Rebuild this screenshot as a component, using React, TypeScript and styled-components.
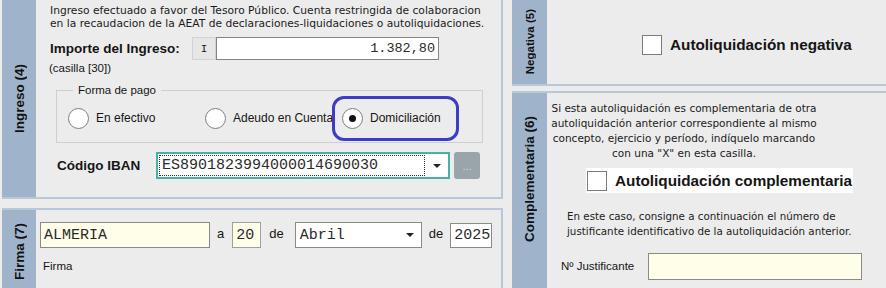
import React from 'react'
import styled, { createGlobalStyle } from 'styled-components'

const GlobalStyle = createGlobalStyle`
    html, body {
        margin: 0;
        padding: 0;
        background: #ececec;
    }
    body {
        font-family: 'Liberation Sans', Arial, sans-serif;
        font-size: 11px;
        color: #151515;
    }
`

const TAB_BG = '#9fb4cb'
const LINE = '#b9c8d8'
const MONO = `'Liberation Mono', 'Courier New', monospace`
const WIDE = `'DejaVu Sans', Verdana, sans-serif`

const Page = styled.div`
    width: 886px;
    height: 288px;
    overflow: hidden;
    box-sizing: border-box;
    padding-left: 2px;
    display: grid;
    grid-template-columns: 501px 1fr;
    column-gap: 9px;
`

const Column = styled.div<{ $gap: number }>`
    display: flex;
    flex-direction: column;
    gap: ${(p) => p.$gap}px;
    min-height: 0;
`

const Section = styled.section<{ $h: number; $top?: boolean; $bottom?: boolean; $right?: boolean }>`
    flex: 0 0 ${(p) => p.$h}px;
    display: flex;
    box-sizing: border-box;
    border-top: ${(p) => (p.$top ? `2px solid ${LINE}` : 'none')};
    border-bottom: ${(p) => (p.$bottom ? `2px solid ${LINE}` : 'none')};
    border-right: ${(p) => (p.$right ? `2px solid ${LINE}` : 'none')};
`

const Tab = styled.div<{ $w: number; $shift?: number }>`
    flex: 0 0 ${(p) => p.$w}px;
    background: ${TAB_BG};
    display: flex;
    align-items: center;
    justify-content: center;
    box-sizing: border-box;
    padding-bottom: ${(p) => p.$shift || 0}px;
`

const TabLabel = styled.span<{ $size: number }>`
    writing-mode: vertical-rl;
    transform: rotate(180deg);
    font-weight: bold;
    font-size: ${(p) => p.$size}px;
    color: #111;
    white-space: nowrap;
`

const Body = styled.div<{ $pad: string }>`
    flex: 1;
    position: relative;
    padding: ${(p) => p.$pad};
    box-sizing: border-box;
`

const Note = styled.p<{ $align?: string; $width?: number; $lh: number; $size: number }>`
    margin: 0;
    font-family: ${WIDE};
    font-size: ${(p) => p.$size}px;
    line-height: ${(p) => p.$lh}px;
    text-align: ${(p) => p.$align || 'left'};
    width: ${(p) => (p.$width ? `${p.$width}px` : 'auto')};
    white-space: nowrap;
    color: #1b1b1b;
`

const Row = styled.div<{ $mt: number; $ml?: number }>`
    display: flex;
    align-items: center;
    margin-top: ${(p) => p.$mt}px;
    margin-left: ${(p) => p.$ml || 0}px;
`

const BoldLabel = styled.span<{ $w?: number; $size?: number }>`
    font-weight: bold;
    font-size: ${(p) => p.$size || 13.5}px;
    width: ${(p) => (p.$w ? `${p.$w}px` : 'auto')};
    flex: 0 0 auto;
    white-space: nowrap;
`

const Prefix = styled.div`
    width: 24px;
    height: 23px;
    box-sizing: border-box;
    background: #e6e6e6;
    border: 1px solid #d2d2d2;
    display: flex;
    align-items: center;
    justify-content: center;
    font-family: ${MONO};
    font-size: 11px;
`

const Field = styled.div<{ $w: number; $h: number; $bg?: string; $border?: string; $align?: string; $size?: number }>`
    width: ${(p) => p.$w}px;
    height: ${(p) => p.$h}px;
    box-sizing: border-box;
    background: ${(p) => p.$bg || '#fff'};
    border: 1px solid ${(p) => p.$border || '#858585'};
    display: flex;
    align-items: center;
    justify-content: ${(p) => (p.$align === 'right' ? 'flex-end' : 'flex-start')};
    padding: 0 3px;
    font-family: ${MONO};
    font-size: ${(p) => p.$size || 15}px;
    color: #2a2a2a;
    flex: 0 0 auto;
`

const Small = styled.div<{ $mt: number; $ml?: number; $w?: number }>`
    margin-top: ${(p) => p.$mt}px;
    margin-left: ${(p) => p.$ml || 0}px;
    width: ${(p) => (p.$w ? `${p.$w}px` : 'auto')};
    flex: 0 0 auto;
    font-size: 11.5px;
    line-height: 13px;
`

const Fieldset = styled.fieldset`
    margin: 9px 0 0 6px;
    width: 427px;
    height: 59px;
    box-sizing: border-box;
    border: 1px solid #cfcfcf;
    padding: 0 0 0 11px;
    display: flex;
    align-items: center;
`

const Legend = styled.legend`
    margin-left: 5px;
    padding: 0 5px;
    font-size: 11.5px;
`

const RadioOption = styled.label`
    width: 137px;
    display: flex;
    align-items: center;
    gap: 7px;
    font-size: 12px;
    white-space: nowrap;
    margin-top: -2px;
`

const RadioCircle = styled.span<{ $on?: boolean }>`
    width: 21px;
    height: 21px;
    box-sizing: border-box;
    border-radius: 50%;
    border: 1px solid #7e7e7e;
    background: #fff;
    display: flex;
    align-items: center;
    justify-content: center;
    flex: 0 0 auto;

    &::after {
        content: '';
        display: ${(p) => (p.$on ? 'block' : 'none')};
        width: 7px;
        height: 7px;
        border-radius: 50%;
        background: #111;
    }
`

const Highlight = styled.div`
    position: absolute;
    left: 296px;
    top: 96px;
    width: 127px;
    height: 45px;
    box-sizing: border-box;
    border: 3.5px solid #3c3cc6;
    border-radius: 12px;
    pointer-events: none;
`

const Combo = styled.div<{ $w: number; $h: number; $border: string; $bw: number }>`
    width: ${(p) => p.$w}px;
    height: ${(p) => p.$h}px;
    box-sizing: border-box;
    border: ${(p) => p.$bw}px solid ${(p) => p.$border};
    background: #fff;
    display: flex;
    align-items: stretch;
    flex: 0 0 auto;
`

const ComboValue = styled.div<{ $focus?: boolean }>`
    flex: 1;
    margin: 1px;
    border: 1px ${(p) => (p.$focus ? 'dotted #333' : 'solid transparent')};
    display: flex;
    align-items: center;
    padding-left: 2px;
    font-family: ${MONO};
    font-size: 15px;
    color: #2a2a2a;
`

const ComboArrow = styled.div`
    flex: 0 0 22px;
    display: flex;
    align-items: center;
    justify-content: center;

    &::after {
        content: '';
        border-left: 4px solid transparent;
        border-right: 4px solid transparent;
        border-top: 4px solid #222;
    }
`

const DotsButton = styled.div`
    margin-left: 4px;
    width: 26px;
    height: 27px;
    border-radius: 3px;
    background: #99a4ab;
    color: #d6dbde;
    display: flex;
    align-items: center;
    justify-content: center;
    font-size: 11px;
`

const Word = styled.span<{ $ml: number; $mr: number }>`
    font-size: 13px;
    margin: -4px ${(p) => p.$mr}px 0 ${(p) => p.$ml}px;
`

const CheckRow = styled.div<{ $mt: number; $ml: number; $w?: number; $bg?: string }>`
    display: flex;
    align-items: center;
    gap: 8px;
    margin-top: ${(p) => p.$mt}px;
    margin-left: ${(p) => p.$ml}px;
    width: ${(p) => (p.$w ? `${p.$w}px` : 'auto')};
    height: 25px;
    background: ${(p) => p.$bg || 'transparent'};
    padding-left: 1px;
`

const CheckBox = styled.span`
    width: 20px;
    height: 20px;
    box-sizing: border-box;
    border: 1px solid #7b7b7b;
    background: #fff;
    flex: 0 0 auto;
`

const App = () => {
    return (
        <>
            <GlobalStyle />
            <Page>
                <Column $gap={9}>
                    <Section $h={199} $bottom $right>
                        <Tab $w={34}>
                            <TabLabel $size={13.5}>Ingreso (4)</TabLabel>
                        </Tab>
                        <Body $pad="4px 0 0 14px">
                            <Note $lh={13} $size={10.7}>
                                Ingreso efectuado a favor del Tesoro Público. Cuenta restringida de colaboracion<br />
                                en la recaudacion de la AEAT de declaraciones-liquidaciones o autoliquidaciones.
                            </Note>
                            <Row $mt={7}>
                                <BoldLabel $w={142}>Importe del Ingreso:</BoldLabel>
                                <Prefix>I</Prefix>
                                <Field $w={223} $h={23} $align="right" $size={13.5}>1.382,80</Field>
                            </Row>
                            <Small $mt={2} $ml={-1}>(casilla [30])</Small>
                            <Fieldset>
                                <Legend>Forma de pago</Legend>
                                <RadioOption><RadioCircle />En efectivo</RadioOption>
                                <RadioOption><RadioCircle />Adeudo en Cuenta</RadioOption>
                                <RadioOption><RadioCircle $on />Domiciliación</RadioOption>
                            </Fieldset>
                            <Row $mt={9} $ml={7}>
                                <BoldLabel $w={99}>Código IBAN</BoldLabel>
                                <Combo $w={294} $h={27} $border="#45b2a7" $bw={2}>
                                    <ComboValue $focus>ES8901823994000014690030</ComboValue>
                                    <ComboArrow />
                                </Combo>
                                <DotsButton>...</DotsButton>
                            </Row>
                            <Highlight />
                        </Body>
                    </Section>
                    <Section $h={96} $top $right>
                        <Tab $w={34} $shift={10}>
                            <TabLabel $size={13.5}>Firma (7)</TabLabel>
                        </Tab>
                        <Body $pad="12px 0 0 4px">
                            <Row $mt={0}>
                                <Field $w={170} $h={26} $bg="#fffee8" $border="#8a8a8a">ALMERIA</Field>
                                <Word $ml={7} $mr={8}>a</Word>
                                <Field $w={29} $h={26} $bg="#fffee8" $border="#a0a0a0">20</Field>
                                <Word $ml={8} $mr={11}>de</Word>
                                <Combo $w={127} $h={26} $border="#8a8a8a" $bw={1}>
                                    <ComboValue>Abril</ComboValue>
                                    <ComboArrow />
                                </Combo>
                                <Word $ml={7} $mr={7}>de</Word>
                                <Field $w={42} $h={25} $border="#8a8a8a">2025</Field>
                            </Row>
                            <Small $mt={12} $ml={3}>Firma</Small>
                        </Body>
                    </Section>
                </Column>
                <Column $gap={5}>
                    <Section $h={86} $bottom>
                        <Tab $w={35}>
                            <TabLabel $size={11.5}>Negativa (5)</TabLabel>
                        </Tab>
                        <Body $pad="32px 0 0 94px">
                            <CheckRow $mt={0} $ml={0}>
                                <CheckBox />
                                <BoldLabel $size={15.3}>Autoliquidación negativa</BoldLabel>
                            </CheckRow>
                        </Body>
                    </Section>
                    <Section $h={220} $top>
                        <Tab $w={35} $shift={46}>
                            <TabLabel $size={13.5}>Complementaria (6)</TabLabel>
                        </Tab>
                        <Body $pad="8px 0 0 3px">
                            <Note $lh={15} $size={10.5} $align="center" $width={268}>
                                Si esta autoliquidación es complementaria de otra<br />
                                autoliquidación anterior correspondiente al mismo<br />
                                concepto, ejercicio y período, indíquelo marcando<br />
                                con una "X" en esta casilla.
                            </Note>
                            <CheckRow $mt={7} $ml={36} $w={266} $bg="#fff">
                                <CheckBox />
                                <BoldLabel $size={15.3}>Autoliquidación complementaria</BoldLabel>
                            </CheckRow>
                            <Small $mt={16} $ml={17}>
                                <Note $lh={15} $size={10.3}>
                                    En este caso, consigne a continuación el número de<br />
                                    justificante identificativo de la autoliquidación anterior.
                                </Note>
                            </Small>
                            <Row $mt={14} $ml={11}>
                                <Small $mt={0} $w={87}>Nº Justificante</Small>
                                <Field $w={214} $h={27} $bg="#fffee8" $border="#8a8a8a" />
                            </Row>
                        </Body>
                    </Section>
                </Column>
            </Page>
        </>
    )
}

export default App
